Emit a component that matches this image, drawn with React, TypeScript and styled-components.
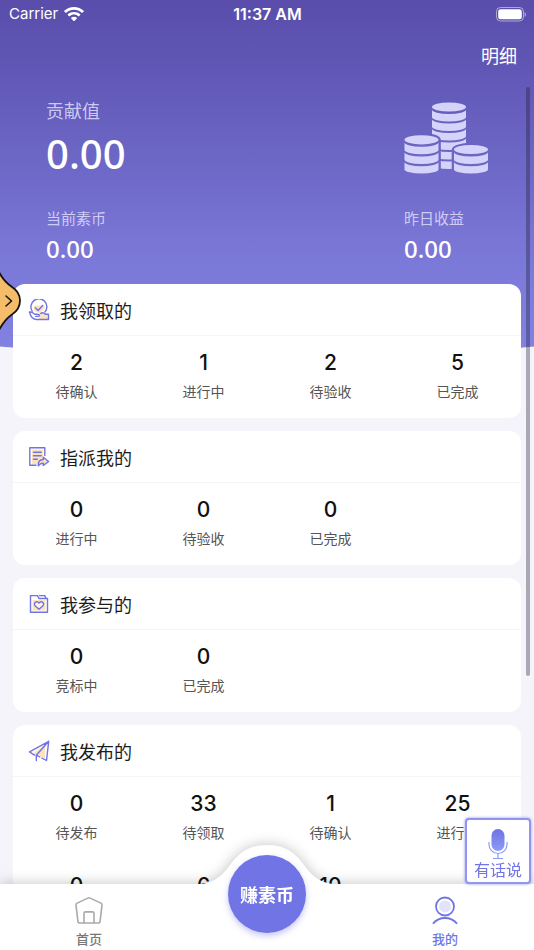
import React from "react";
import styled, { createGlobalStyle } from "styled-components";

const cjk = '"Noto Sans CJK SC", sans-serif';
const accent = "#7074e4";
const cream = "#fde3bd";

const GlobalStyle = createGlobalStyle`
  * { box-sizing: border-box; }
  body { margin: 0; font-family: ${cjk}; color: #1c1c1c; background: #f5f4fa; }
  button { border: 0; padding: 0; background: none; font: inherit; color: inherit; cursor: pointer; }
  h2, p, ul { margin: 0; padding: 0; list-style: none; font-weight: 400; }
  svg { display: block; }
`;

const Screen = styled.div`
  position: relative;
  display: flex;
  flex-direction: column;
  height: 100vh;
  overflow: hidden;
  isolation: isolate;
`;

const Backdrop = styled.div`
  position: absolute;
  z-index: -1;
  top: 0;
  left: -20%;
  right: -20%;
  height: 356px;
  border-radius: 0 0 50% 50% / 0 0 32px 32px;
  background: linear-gradient(#5a4dab, #5f56b4 60px, #6b65c4 150px, #7b79d8 260px, #8282e2);
`;

const StatusBar = styled.div`
  display: grid;
  grid-template-columns: 1fr auto 1fr;
  align-items: center;
  height: 28px;
  padding: 0 8px 0 9px;
  color: #fff;
  font: 400 15px/20px Inter, sans-serif;
`;

const Carrier = styled.div`
  display: flex;
  align-items: center;
  gap: 6px;
`;

const Clock = styled.time`
  font-size: 16px;
  font-weight: 600;
`;

const Battery = styled.svg`
  justify-self: end;
`;

const TopBar = styled.header`
  display: flex;
  justify-content: flex-end;
  align-items: center;
  height: 56px;
  padding: 0 17px 3px;
  color: #fff;
  font-size: 18px;
  line-height: 24px;
`;

const Content = styled.main`
  flex: 1;
  min-height: 0;
  overflow-y: auto;
  scrollbar-width: none;
`;

const Hero = styled.section`
  display: grid;
  grid-template-columns: 1fr 84px;
  row-gap: 30px;
  padding: 14px 46px 19px;
  color: #fff;
`;

const Figure = styled.div<{ $large?: boolean }>`
  display: flex;
  flex-direction: column;
  gap: ${(p) => (p.$large ? 8 : 5)}px;
`;

const FigureLabel = styled.p<{ $large?: boolean }>`
  font-size: ${(p) => (p.$large ? 18 : 15)}px;
  line-height: ${(p) => (p.$large ? 24 : 20)}px;
  color: rgba(224, 222, 255, 0.85);
`;

const FigureValue = styled.p<{ $large?: boolean }>`
  font-family: "Noto Sans", sans-serif;
  font-weight: 500;
  font-size: ${(p) => (p.$large ? 40 : 24)}px;
  line-height: ${(p) => (p.$large ? 48 : 32)}px;
`;

const Cards = styled.div`
  display: flex;
  flex-direction: column;
  gap: 13px;
  padding: 0 13px 13px;
`;

const Card = styled.section`
  border-radius: 12px;
  background: #fff;
`;

const CardHeader = styled.header`
  display: flex;
  align-items: center;
  gap: 10px;
  height: 52px;
  padding-left: 15px;
  border-bottom: 1px solid #f4f4f6;
`;

const CardTitle = styled.h2`
  font-size: 18px;
  line-height: 24px;
`;

const Stats = styled.ul`
  display: grid;
  grid-template-columns: repeat(4, 1fr);
`;

const Stat = styled.li`
  display: flex;
  flex-direction: column;
  align-items: center;
  gap: 6px;
  height: 82px;
  padding-top: 15px;
`;

const Count = styled.span`
  font: 500 21px/24px Inter, sans-serif;
  color: #111;
`;

const StatLabel = styled.span`
  font-size: 14px;
  line-height: 20px;
  color: #555;
`;

const ScrollThumb = styled.div`
  position: absolute;
  top: 87px;
  right: 4px;
  width: 4px;
  height: 62%;
  border-radius: 2px;
  background: rgba(30, 28, 45, 0.35);
`;

const DrawerHandle = styled.button`
  position: absolute;
  top: 271px;
  left: 0;
`;

const VoiceButton = styled.button`
  position: absolute;
  right: 3px;
  bottom: 66px;
  display: flex;
  flex-direction: column;
  align-items: center;
  width: 66px;
  height: 66px;
  padding-top: 8px;
  border: 2px solid #9295ef;
  border-radius: 4px;
  background: #fff;
  box-shadow: 0 0 3px #9295ef;
  color: ${accent};
  font-size: 16px;
  line-height: 18px;
  white-space: nowrap;
`;

const TabBar = styled.nav`
  position: relative;
  display: grid;
  grid-template-columns: repeat(3, 1fr);
  height: 66px;
  background: #fff;
  filter: drop-shadow(0 0 7px rgba(0, 0, 0, 0.24));
`;

const Tab = styled.a<{ $active?: boolean }>`
  display: flex;
  flex-direction: column;
  align-items: center;
  gap: 6px;
  padding-top: 12px;
  font-size: 13px;
  line-height: 18px;
  font-weight: 500;
  text-decoration: none;
  color: ${(p) => (p.$active ? accent : "#777")};
`;

const CenterSlot = styled.div`
  position: relative;
  display: flex;
  justify-content: center;
`;

const Bump = styled.svg`
  position: absolute;
  bottom: 65px;
  left: 50%;
  transform: translateX(-50%);
`;

const EarnButton = styled.button`
  position: absolute;
  top: -29px;
  width: 78px;
  height: 78px;
  border-radius: 50%;
  background: ${accent};
  box-shadow: 0 3px 6px rgba(112, 116, 228, 0.4);
  color: #fff;
  font-size: 18px;
  line-height: 24px;
  font-weight: 700;
`;

const WifiIcon = () => (
  <svg width="20" height="15" viewBox="0 0 20 15" fill="#fff" aria-hidden="true">
    <path d="M10 0C6.2 0 2.8 1.4.3 3.7c-.3.2-.3.5 0 .8l1.2 1.2c.2.2.5.2.8 0C4.300 3.900 7 2.800 10 2.800s5.700 1.100 7.700 2.900c.3.2.6.2.8 0l1.200-1.200c.3-.3.3-.6 0-.8C17.200 1.400 13.800 0 10 0z" />
    <path d="M10 4.900c-2.400 0-4.600.9-6.200 2.300-.3.3-.3.6 0 .8L5 9.200c.2.2.5.2.8 0 1.100-1 2.600-1.600 4.200-1.600s3.100.6 4.200 1.600c.3.2.6.2.8 0L16.200 8c.3-.2.3-.5 0-.8C14.600 5.800 12.400 4.900 10 4.900z" />
    <path d="M10 9.700c-1.100 0-2.100.4-2.800 1-.3.200-.3.500 0 .800l2.400 2.400c.200.200.600.200.800 0l2.400-2.400c.3-.3.3-.6 0-.800-.7-.6-1.700-1-2.800-1z" />
  </svg>
);

const BatteryIcon = () => (
  <Battery width="31" height="15" viewBox="0 0 31 15" aria-hidden="true">
    <rect x="1.500" y=".5" width="27" height="13.500" rx="4" fill="none" stroke="#fff" strokeOpacity=".5" />
    <rect x="3.200" y="2.200" width="23.600" height="10.100" rx="2.500" fill="#fff" />
    <path d="M29.600 5v4.800c.9-.4 1.400-1.300 1.400-2.400S30.500 5.400 29.600 5z" fill="#fff" fillOpacity=".5" />
  </Battery>
);

const coinEdge = (x: number, y: number) =>
  `M${x} ${y}a17 4.200 0 0 0 34 0v7.400a17 4.200 0 0 1-34 0z`;

const CoinsIcon = () => (
  <svg width="84" height="80" viewBox="0 -3 84 80" fill="#d5d3fa" aria-hidden="true">
    <mask id="rear-stack" maskUnits="userSpaceOnUse" x="0" y="0" width="84" height="76">
      <rect width="84" height="76" fill="#fff" />
      <g fill="#000" stroke="#000" strokeWidth="4.600">
        <path d="M.5 39a17 4.800 0 0 1 34 0v30a17 4.200 0 0 1-34 0z" />
        <path d="M50 49a17 4.800 0 0 1 34 0v20a17 4.200 0 0 1-34 0z" />
      </g>
    </mask>
    <g mask="url(#rear-stack)">
      <ellipse cx="45" cy="6" rx="17" ry="4.600" />
      {[0, 1, 2, 3, 4, 5].map((i) => (
        <path key={i} d={coinEdge(28, 8.8 + i * 9.5)} />
      ))}
    </g>
    <ellipse cx="17.500" cy="38.800" rx="17" ry="4.600" />
    {[41.6, 51.3, 61].map((y) => (
      <path key={y} d={coinEdge(0.5, y)} />
    ))}
    <ellipse cx="67" cy="48.500" rx="17" ry="4.600" />
    {[51.3, 61].map((y) => (
      <path key={y} d={coinEdge(50, y)} />
    ))}
  </svg>
);

const iconProps = {
  width: 22,
  height: 22,
  viewBox: "0 0 22 22",
  fill: "none",
  stroke: accent,
  strokeWidth: 1.4,
  strokeLinecap: "round" as const,
  strokeLinejoin: "round" as const,
  "aria-hidden": true,
};

const ReceivedIcon = () => (
  <svg {...iconProps}>
    <path d="M6 6.500h9.500l1.500 2-5 5.500-6-2z" fill={cream} stroke="none" />
    <path d="M10.500 14.500l5.500-1 4 1.500v5h-9z" fill={cream} stroke="none" />
    <path d="M4.200 12.200A8 8 0 1 1 17 13" />
    <path d="M7.300 8.800l2.800 2.700 4.600-4.900" />
    <path d="M1.500 13.200c1.600-.9 3 .5 4.600 1.600 1.300.8 2.900.3 4.400.6 1.300.3 1.200 1.900-.2 2H7.600" />
    <path d="M1.500 13.200c1 3.500 3.500 7.300 7 7.300h12v-5.300h-3.200c-1.300-1.300-3.200-1.700-4.600-.8" />
  </svg>
);

const AssignedIcon = () => (
  <svg {...iconProps}>
    <path d="M4 3.500h11v9l-5.500 6H4z" fill={cream} stroke="none" />
    <path d="M16.800 9.500V1.800h-15v17.400H8" />
    <path d="M5.500 6.200h7.800M5.500 9.800h7.800M5.500 13.300h3.800" />
    <path d="M10.300 20c-.4-4 1.300-6.400 5-6.500v-2.200l5.300 4.200-5.300 4v-2.300c-2.300 0-3.800.8-5 2.800z" fill={cream} />
  </svg>
);

const JoinedIcon = () => (
  <svg {...iconProps}>
    <path d="M4.500 7h13v10.500h-13z" fill={cream} stroke="none" />
    <path d="M2.500 2.600h7l1.500 2.900h8.500v13.700h-17z" />
    <path d="M11.500 2.600h5.200l1.200 2.700" />
    <path d="M11 16.300l-3.900-3.600c-2.300-2.500 1.800-5.500 3.900-2.600 2.100-2.900 6.200.1 3.900 2.600z" fill="#fff5e6" />
  </svg>
);

const PublishedIcon = () => (
  <svg {...iconProps}>
    <path d="M17.500 4L5.500 13l2 2.500L17 18z" fill={cream} stroke="none" />
    <path d="M6.500 15.200l-5-3.400L20.700 1.300l-2.200 19.200-4.500-2.300M20.700 1.300L8.300 15.200v5.300M8.300 15.200l3.500 1.800" />
  </svg>
);

const HomeIcon = () => (
  <svg width="28" height="28" viewBox="0 0 28 28" fill="none" stroke="#aaa" strokeWidth="1.600" strokeLinejoin="round" aria-hidden="true">
    <path d="M12.800 2.100L2.100 7.100c-.8.400-1.200 1.100-1.100 2l1.900 16c.1 1.100.9 1.900 2 1.900h18.200c1.100 0 1.900-.8 2-1.900l1.900-16c.1-.9-.3-1.600-1.100-2L15.200 2.100c-.8-.4-1.600-.4-2.400 0z" />
    <path d="M9 27V17.500c0-1 .6-1.600 1.600-1.600h6.800c1 0 1.600.6 1.600 1.600V27" />
  </svg>
);

const ProfileIcon = () => (
  <svg width="28" height="28" viewBox="0 0 28 28" fill="none" stroke={accent} strokeWidth="1.800" strokeLinecap="round" aria-hidden="true">
    <circle cx="14" cy="10.500" r="9" />
    <circle cx="14" cy="10.500" r="6" fill="#e2e2fb" stroke="none" />
    <path d="M2.500 27.200c3-3.600 7-5.200 11.500-5.200s8.500 1.600 11.500 5.200" />
  </svg>
);

const MicIcon = () => (
  <svg width="20" height="32" viewBox="0 0 20 32" fill="none" aria-hidden="true">
    <defs>
      <linearGradient id="mic" x1="0" y1="0" x2="0" y2="1">
        <stop stopColor="#6e72e2" />
        <stop offset="1" stopColor="#8c9cf5" />
      </linearGradient>
    </defs>
    <rect x="3.500" y="1" width="13" height="22" rx="6.500" fill="url(#mic)" />
    <path d="M1 14v2.500a9 9 0 0 0 18 0V14M10 25.500v5M5 30.500h10" stroke="#8c9cf5" strokeWidth="1.200" />
  </svg>
);

const cards = [
  { title: "我领取的", Icon: ReceivedIcon, stats: [["2", "待确认"], ["1", "进行中"], ["2", "待验收"], ["5", "已完成"]] },
  { title: "指派我的", Icon: AssignedIcon, stats: [["0", "进行中"], ["0", "待验收"], ["0", "已完成"]] },
  { title: "我参与的", Icon: JoinedIcon, stats: [["0", "竞标中"], ["0", "已完成"]] },
  {
    title: "我发布的",
    Icon: PublishedIcon,
    stats: [["0", "待发布"], ["33", "待领取"], ["1", "待确认"], ["25", "进行中"], ["0"], ["6"], ["10"]],
  },
];

export default function App() {
  return (
    <>
      <GlobalStyle />
      <Screen>
        <Backdrop />
        <StatusBar>
          <Carrier>
            Carrier
            <WifiIcon />
          </Carrier>
          <Clock>11:37 AM</Clock>
          <BatteryIcon />
        </StatusBar>
        <TopBar>
          <button type="button">明细</button>
        </TopBar>
        <Content>
          <Hero>
            <Figure $large>
              <FigureLabel $large>贡献值</FigureLabel>
              <FigureValue $large>0.00</FigureValue>
            </Figure>
            <CoinsIcon />
            <Figure>
              <FigureLabel>当前素币</FigureLabel>
              <FigureValue>0.00</FigureValue>
            </Figure>
            <Figure>
              <FigureLabel>昨日收益</FigureLabel>
              <FigureValue>0.00</FigureValue>
            </Figure>
          </Hero>
          <Cards>
            {cards.map(({ title, Icon, stats }) => (
              <Card key={title}>
                <CardHeader>
                  <Icon />
                  <CardTitle>{title}</CardTitle>
                </CardHeader>
                <Stats>
                  {stats.map(([count, label], i) => (
                    <Stat key={i}>
                      <Count>{count}</Count>
                      {label && <StatLabel>{label}</StatLabel>}
                    </Stat>
                  ))}
                </Stats>
              </Card>
            ))}
          </Cards>
        </Content>
        <ScrollThumb />
        <DrawerHandle type="button" aria-label="展开">
          <svg width="22" height="60" viewBox="0 0 22 60" fill="none" stroke="#151515" strokeLinecap="round" strokeLinejoin="round">
            <path d="M-2 -1C2 8 6 12 12 16c5.500 3.500 8 8 8 13.500S17.500 40 12 43.500C6 47.500 2 53 -2 61z" fill="#f5bc69" strokeWidth="1.800" />
            <path d="M6 25l5.500 5L6 35" strokeWidth="1.600" />
          </svg>
        </DrawerHandle>
        <TabBar>
          <Tab href="#home">
            <HomeIcon />
            首页
          </Tab>
          <CenterSlot>
            <Bump width="150" height="40" viewBox="0 0 150 40" aria-hidden="true">
              <path d="M0 40V39.500C19 39.500 26 34 35 24 44 12 52 0 75 0s31 12 40 24c9 10 16 15.500 35 15.500V40z" fill="#fff" />
            </Bump>
            <EarnButton type="button">赚素币</EarnButton>
          </CenterSlot>
          <Tab href="#mine" $active aria-current="page">
            <ProfileIcon />
            我的
          </Tab>
        </TabBar>
        <VoiceButton type="button">
          <MicIcon />
          有话说
        </VoiceButton>
      </Screen>
    </>
  );
}
